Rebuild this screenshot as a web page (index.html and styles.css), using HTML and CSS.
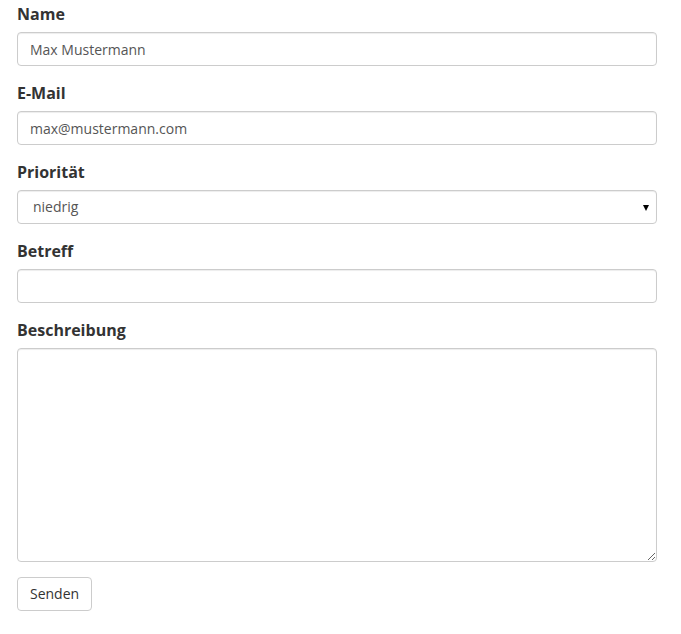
FILE: index.html
```html
<!DOCTYPE html>
<html>
<head>
    <meta charset="UTF-8">
    <title>Ticket erstellen</title>
    <link rel="stylesheet" href="styles.css">
</head>
<body>
    <form class="ticket-form">
        <div class="form-group">
            <label for="name">Name</label>
            <input class="form-control" id="name" type="text" value="Max Mustermann">
        </div>
        <div class="form-group">
            <label for="email">E-Mail</label>
            <input class="form-control" id="email" type="email" value="max@mustermann.com">
        </div>
        <div class="form-group">
            <label for="prio">Priorität</label>
            <div class="select-wrap">
                <select class="form-control select" id="prio">
                    <option>niedrig</option>
                    <option>mittel</option>
                    <option>hoch</option>
                </select>
            </div>
        </div>
        <div class="form-group">
            <label for="subject">Betreff</label>
            <input class="form-control" id="subject" type="text">
        </div>
        <div class="form-group">
            <label for="desc">Beschreibung</label>
            <textarea class="form-control textarea" id="desc"></textarea>
        </div>
        <button type="button" class="btn">Senden</button>
    </form>
</body>
</html>
```

FILE: styles.css
```css
body {
    font-family: "Open Sans", sans-serif;
    font-size: 14px;
    color: #333;
    margin: 0;
    background: #fff;
}
.ticket-form {
    width: 640px;
    padding: 2px 0 0 17px;
}
.form-group {
    margin-bottom: 15px;
}
label {
    display: block;
    font-size: 16px;
    font-weight: bold;
    line-height: 25px;
    margin-bottom: 5px;
}
.form-control {
    display: block;
    box-sizing: border-box;
    width: 100%;
    height: 34px;
    padding: 6px 12px;
    font-family: "Open Sans", sans-serif;
    font-size: 14px;
    line-height: 20px;
    color: #555;
    background: #fff;
    border: 1px solid #ccc;
    border-radius: 4px;
    box-shadow: inset 0 1px 1px rgba(0,0,0,0.075);
    margin: 0;
}
.select-wrap {
    position: relative;
}
.select {
    appearance: none;
    -webkit-appearance: none;
    padding-left: 15px;
}
.select-wrap::after {
    content: "";
    position: absolute;
    right: 8px;
    top: 15px;
    border-left: 3.5px solid transparent;
    border-right: 3.5px solid transparent;
    border-top: 6px solid #000;
    pointer-events: none;
}
.textarea {
    height: 214px;
    resize: vertical;
}
.btn {
    font-family: "Open Sans", sans-serif;
    font-size: 14px;
    line-height: 20px;
    color: #333;
    background: #fff;
    border: 1px solid #ccc;
    border-radius: 4px;
    padding: 6px 12px;
    cursor: pointer;
}
.btn:hover {
    background: #e6e6e6;
}
```
